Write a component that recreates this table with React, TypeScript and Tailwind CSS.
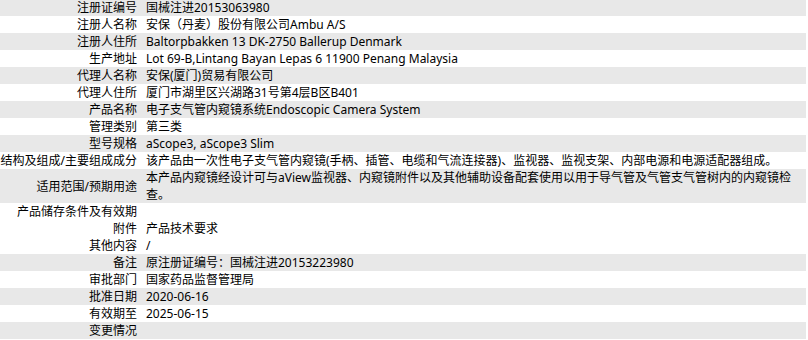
import React from "react";

const rows: { label: string; value: string; gray: boolean }[] = [
  { label: "注册证编号", value: "国械注进20153063980", gray: true },
  { label: "注册人名称", value: "安保（丹麦）股份有限公司Ambu A/S", gray: false },
  { label: "注册人住所", value: "Baltorpbakken 13 DK-2750 Ballerup Denmark", gray: true },
  { label: "生产地址", value: "Lot 69-B,Lintang Bayan Lepas 6 11900 Penang Malaysia", gray: false },
  { label: "代理人名称", value: "安保(厦门)贸易有限公司", gray: true },
  { label: "代理人住所", value: "厦门市湖里区兴湖路31号第4层B区B401", gray: false },
  { label: "产品名称", value: "电子支气管内窥镜系统Endoscopic Camera System", gray: true },
  { label: "管理类别", value: "第三类", gray: false },
  { label: "型号规格", value: "aScope3, aScope3 Slim", gray: true },
  {
    label: "结构及组成/主要组成成分",
    value: "该产品由一次性电子支气管内窥镜(手柄、插管、电缆和气流连接器)、监视器、监视支架、内部电源和电源适配器组成。",
    gray: false,
  },
  {
    label: "适用范围/预期用途",
    value:
      "本产品内窥镜经设计可与aView监视器、内窥镜附件以及其他辅助设备配套使用以用于导气管及气管支气管树内的内窥镜检查。",
    gray: true,
  },
  { label: "产品储存条件及有效期", value: "", gray: false },
  { label: "附件", value: "产品技术要求", gray: false },
  { label: "其他内容", value: "/", gray: false },
  { label: "备注", value: "原注册证编号：国械注进20153223980", gray: true },
  { label: "审批部门", value: "国家药品监督管理局", gray: false },
  { label: "批准日期", value: "2020-06-16", gray: true },
  { label: "有效期至", value: "2025-06-15", gray: false },
  { label: "变更情况", value: "", gray: true },
];

export default function App() {
  return (
    <div
      className="w-[808px] h-[340px] overflow-hidden bg-white text-[12px] leading-[17px] text-black"
      style={{ fontFamily: '"Noto Sans", "Noto Sans CJK SC", sans-serif' }}
    >
      <div className="w-[806px] -mt-px">
        {rows.map((r, i) => (
          <div
            key={i}
            className={`flex items-center ${r.gray ? "bg-[#e8e8e8]" : "bg-white"}`}
          >
            <div className="w-[140px] shrink-0 text-right pr-[3px] whitespace-nowrap">
              {r.label}
            </div>
            <div className="flex-1 pl-[6px] pr-[8px] min-h-[17px]">{r.value}</div>
          </div>
        ))}
      </div>
    </div>
  );
}
